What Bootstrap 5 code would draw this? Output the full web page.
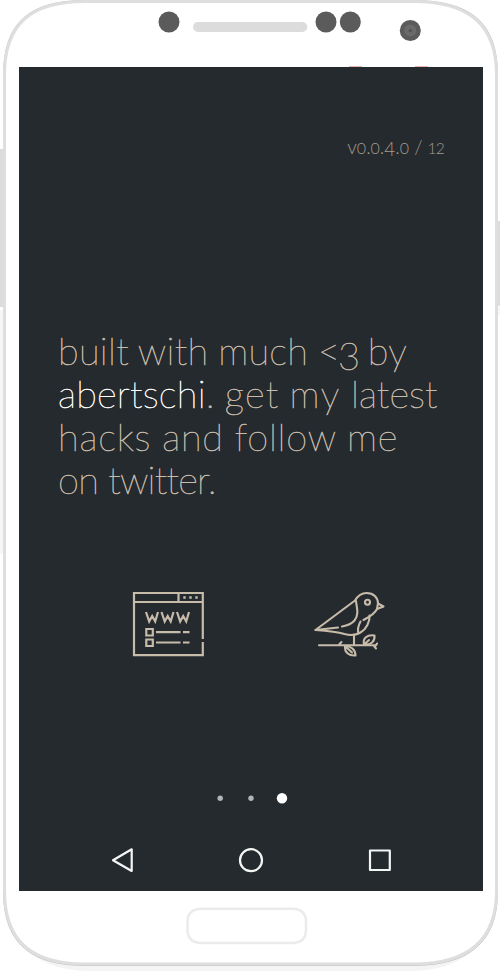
<!DOCTYPE html>
<html lang="en">
<head>
<meta charset="utf-8">
<meta name="viewport" content="width=device-width, initial-scale=1">
<title>About</title>
<link href="https://cdn.jsdelivr.net/npm/bootstrap@5.3.0/dist/css/bootstrap.min.css" rel="stylesheet">
<style>
body{background:#fff;font-family:Lato,"Open Sans",sans-serif}
.phone{width:500px;height:972px}
.shell{top:0;left:0;z-index:0}
.top-bar{height:67px}
.screen{width:464px;height:824px;margin-left:19px;background:#252a2e;color:#c7bbaa;z-index:1}
.version{height:91px;padding:68px 39px 0 0;font-size:19px;line-height:24px;font-weight:300;color:#a39b90;white-space:nowrap}
.version .os{font-size:16px}
.version .pair{font-size:15.5px;letter-spacing:-.8px}
.blurb{margin:171px 0 0 39px;font-size:38px;line-height:43px;font-weight:100;white-space:nowrap;font-variant-ligatures:none;-webkit-text-stroke:.6px currentColor}
.blurb a{color:#fff;letter-spacing:.2px}
.low{display:inline-block;line-height:1;transform:translateY(13%)}
.l1{letter-spacing:.3px;word-spacing:-1.5px}
.l1 .heart{letter-spacing:-2px}
.l2{word-spacing:-.6px}
.l2 .w1{letter-spacing:1.2px}
.l2 .w2{letter-spacing:1.4px}
.l2 .w3{letter-spacing:.1px}
.l3{letter-spacing:.8px;word-spacing:-.8px}
.l4{letter-spacing:-.75px}
.actions{height:72px;margin-top:88px;padding-left:110px}
.pager{height:12px;margin-top:131px}
.softkeys{height:30px;margin-top:41px}
.home-row{height:81px}
</style>
<script src="https://cdn.jsdelivr.net/npm/bootstrap@5.3.0/dist/js/bootstrap.bundle.min.js"></script>
</head>
<body>
<div class="phone position-relative overflow-hidden">
  <svg class="shell position-absolute" width="500" height="972" viewBox="0 0 500 972" fill="none" aria-hidden="true">
    <path d="M6 900C8 946 40 971 90 971H410C460 971 492 946 494 900Z" fill="#f4f4f4"/>
    <path d="M0 310h3v244H0zM497 307h3v8h-3z" fill="#f6f6f6"/>
    <path d="M0 149h4v158H0zM496 221h4v85h-4z" fill="#dcdcdc"/>
    <path d="M3.5 75C3.5 22 30 .5 85 .5H413C470 .5 497.500 22 497.500 75V892C497.500 944 467 965.500 413 965.500H85C32 965.500 3.500 944 3.500 892Z" fill="#fff" stroke="#c4c4c4"/>
    <path d="M4.500 75C4.500 24 31 1.500 85 1.500H413C468 1.500 496.500 24 496.500 75V891C496.500 942 466 964 413 964H85C33 964 4.500 942 4.500 891Z" fill="#fff" stroke="#dedede" stroke-width="3"/>
    <g fill="#5b5b5b"><circle cx="169" cy="22" r="10.500"/><circle cx="326" cy="22" r="10.500"/><circle cx="350.300" cy="22" r="10.500"/><circle cx="410.300" cy="30.500" r="10.500"/></g>
    <circle cx="410.300" cy="30.500" r="6" fill="#6a6a6a"/><circle cx="410.300" cy="30.500" r="1.700" fill="#535353"/>
    <rect x="193" y="22" width="114.300" height="10" rx="5" fill="#dcdcdc"/>
    <path d="M202 908.700H292Q306 908.700 306 922V929.500Q306 943 292 943H202Q187.500 943 187.500 929.500V922Q187.500 908.700 202 908.700Z" stroke="#ebebeb" stroke-width="2.500"/>
    <path d="M349 66.500h13M415 66.500h13" stroke="#e8b4b0"/>
  </svg>
  <div class="top-bar"></div>
  <main class="screen position-relative d-flex flex-column">
    <div class="version text-end">v<span class="os">0</span>.<span class="os">0</span>.<span class="low">4</span>.<span class="os">0</span> / <span class="pair">12</span></div>
    <p class="blurb mb-0"><span class="l1">built with much <span class="heart">&lt;<span class="low">3</span></span> by</span><br><span class="l2"><a href="#" class="text-decoration-none">abertschi</a>. <span class="w1">get</span> <span class="w2">my</span> <span class="w3">latest</span></span><br><span class="l3">hacks and follow me</span><br><span class="l4">on twitter.</span></p>
    <div class="actions d-flex">
      <svg width="180" height="72" viewBox="129 589 180 72" fill="none" stroke="#c7bbaa" stroke-width="2.200" aria-label="website">
        <path d="M202.800 639V593H134V655.200H202.800V642M134 602H203M178.500 593V602"/>
        <path d="M183.300 597.500h2.400M189.300 597.500h2.400M195.300 597.500h2.400" stroke-width="2.400"/>
        <path d="M146 612L149.200 621.500L152.200 616L155.200 621.500L158 612M161.500 612L164.700 621.500L167.700 616L170.700 621.500L173.500 612M177 612L180.200 621.500L183.200 616L186.200 621.500L189 612"/>
        <path d="M146.300 629h6.500v6.500h-6.500zM146.300 639.500h6.500v6.500h-6.500zM156 632.200H180.500M183 632.200H189.500M156 642.500H180.500M183 642.500H189.500"/>
      </svg>
      <svg width="90" height="72" viewBox="309 589 90 72" fill="none" stroke="#c7bbaa" stroke-width="2.100" stroke-linecap="round" stroke-linejoin="round" aria-label="twitter">
        <path d="M338 627.500L315.500 630L355 600.500C358 595.500 361 593 366.500 593C373.500 593 378 597.500 378 603.500L383.500 606.500L377 609C374.500 614 369.500 617 363.500 620"/>
        <path d="M315.500 630C331 631 338 632 344.500 634C350 635.500 356 635 360.500 632.500C366.500 629 370 621.500 369.500 615.500"/>
        <path d="M356 601C356.500 607 359.500 614 354.500 620.500C351.500 624 347.500 625.500 342 626.500M360.500 621.500C358 626 357.500 630 358.500 633.500M378 603.500L377 609M354 635V644M319 645.300H376M376 645.300L377 643.500M373.500 645.300L376 648.500M339.500 644L341.500 642"/>
        <path d="M364 644.500C362.500 638 367 634.500 374.500 635.500C375 641.500 371 645 364 644.500ZM364 644.500L369 640M345 646C344.500 652 348.500 656 355.500 655.500C355.500 649.500 351 646 345 646ZM345 646L352 652.500"/>
        <circle cx="367.500" cy="602.200" r="2.500"/>
      </svg>
    </div>
    <div class="pager">
      <svg class="d-block" width="464" height="12" viewBox="19 792 464 12" fill="#b2b4b5" aria-hidden="true"><circle cx="220.200" cy="798.300" r="2.700"/><circle cx="251" cy="798.300" r="2.700"/><circle cx="282" cy="798.300" r="5.200" fill="#fff"/></svg>
    </div>
    <div class="softkeys">
      <svg class="d-block" width="464" height="30" viewBox="19 845 464 30" fill="none" stroke="#f4f5f5" stroke-width="2.200" stroke-linejoin="round" aria-hidden="true"><path d="M131.700 849.300V871L113 860.200Z"/><circle cx="251" cy="860.200" r="11"/><rect x="370" y="850.500" width="19.800" height="19.500"/></svg>
    </div>
  </main>
  <div class="home-row"></div>
</div>
</body>
</html>
